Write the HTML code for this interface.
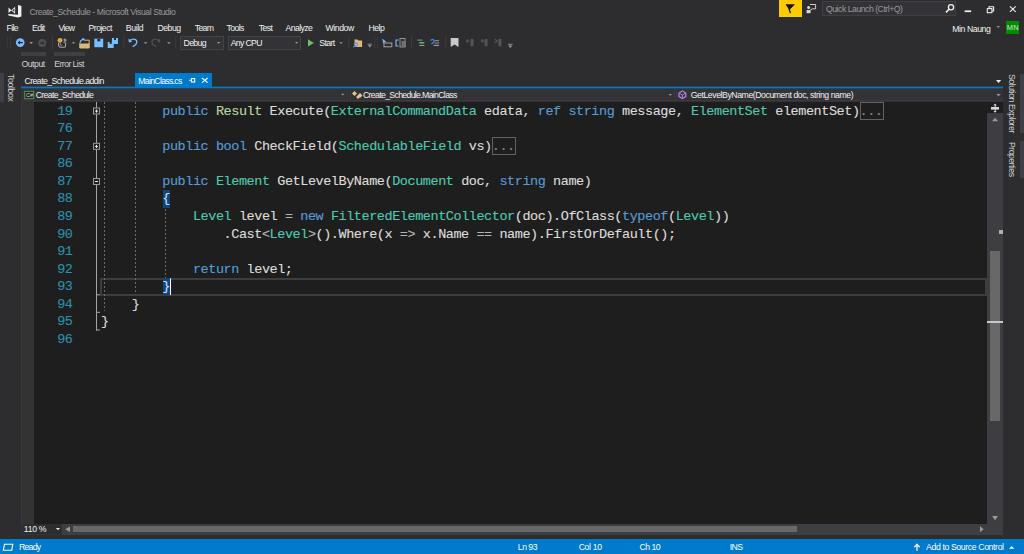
<!DOCTYPE html>
<html><head><meta charset="utf-8">
<style>
*{margin:0;padding:0;box-sizing:border-box}
html,body{width:1024px;height:554px;overflow:hidden;background:#2d2d30;position:relative;font-family:"Liberation Sans",sans-serif;}
.a{position:absolute}
.t{position:absolute;font-size:8.7px;letter-spacing:-0.4px;line-height:10px;white-space:nowrap;color:#f1f1f1}
.g{color:#999999}
.w{color:#ffffff}.d{color:#d0d0d0}
.code{position:absolute;left:101px;top:102.7px;-webkit-text-stroke:0.12px currentColor;font-family:"Liberation Mono",monospace;font-size:13.5px;letter-spacing:-0.44px;line-height:17.55px;white-space:pre;color:#dcdcdc}
.k{color:#569cd6}.col{color:#858585}.ty{color:#4ec9b0}.en{color:#b8d7a3}.op{color:#b4b4b4}
.ln{position:absolute;left:39px;width:33.5px;top:102.7px;-webkit-text-stroke:0.12px currentColor;font-family:"Liberation Mono",monospace;font-size:13.5px;letter-spacing:-0.44px;line-height:17.55px;white-space:pre;color:#2b91af;text-align:right}
.rot{transform-origin:0 0;transform:rotate(90deg)}
svg{position:absolute;left:0;top:0}
</style></head><body>

<!-- ===== backgrounds ===== -->
<!-- quick launch box -->
<div class="a" style="left:822px;top:1px;width:134px;height:15px;background:#333337;border:1px solid #3f3f46"></div>
<!-- yellow feedback -->
<div class="a" style="left:779px;top:0;width:23px;height:17px;background:#ffcc00"></div>
<!-- MN badge -->
<div class="a" style="left:1006px;top:21px;width:13px;height:13px;background:#028c02"></div>

<!-- combos -->
<div class="a" style="left:180px;top:36px;width:44px;height:14px;background:#333337;border:1px solid #434346"></div>
<div class="a" style="left:228px;top:36px;width:73px;height:14px;background:#333337;border:1px solid #434346"></div>

<!-- output / error list bars -->
<div class="a" style="left:21px;top:52px;width:25px;height:4px;background:#3f3f46"></div>
<div class="a" style="left:54px;top:52px;width:31px;height:4px;background:#3f3f46"></div>

<!-- toolbox strip -->
<div class="a" style="left:0;top:73px;width:4px;height:29px;background:#3f3f46"></div>
<!-- right strips -->
<div class="a" style="left:1020px;top:74px;width:4px;height:59px;background:#3f3f46"></div>
<div class="a" style="left:1020px;top:141px;width:4px;height:37px;background:#3f3f46"></div>

<!-- tab -->
<div class="a" style="left:21px;top:86px;width:982px;height:1px;background:#1d4867"></div>
<div class="a" style="left:21px;top:87px;width:982px;height:1px;background:#007acc"></div>
<div class="a" style="left:21px;top:88px;width:982px;height:1px;background:#244864"></div>
<div class="a" style="left:135px;top:73.3px;width:77px;height:14px;background:#007acc"></div>

<!-- nav bar -->
<div class="a" style="left:21px;top:89px;width:982px;height:13px;background:#333337"></div>
<div class="a" style="left:22px;top:89px;width:326px;height:12px;background:#333337;border-bottom:1px solid #3a3a3e;border-right:1px solid #3a3a3e"></div>
<div class="a" style="left:350px;top:89px;width:325px;height:12px;background:#333337;border-bottom:1px solid #3a3a3e;border-right:1px solid #3a3a3e;border-left:1px solid #3a3a3e"></div>
<div class="a" style="left:676px;top:89px;width:327px;height:12px;background:#333337;border-bottom:1px solid #3a3a3e;border-left:1px solid #3a3a3e"></div>

<!-- editor -->
<div class="a" style="left:21px;top:102px;width:13px;height:421.5px;background:#333333;border-left:1px solid #3b3a42"></div>
<div class="a" style="left:34px;top:102px;width:953px;height:421.5px;background:#1e1e1e"></div>

<!-- current line box -->
<div class="a" style="left:100px;top:278px;width:887px;height:18px;border:2px solid #3d3d3d"></div>
<!-- brace highlights -->
<div class="a" style="left:162.6px;top:190px;width:7.7px;height:17.7px;background:#0e4583"></div>
<div class="a" style="left:162.6px;top:278.3px;width:7.7px;height:16.8px;background:#0e4583"></div>
<!-- collapsed boxes -->
<div class="a" style="left:860px;top:102.3px;width:24px;height:17.3px;border:1px solid #626262"></div>
<div class="a" style="left:491.8px;top:137.2px;width:24.2px;height:17.9px;border:1px solid #626262"></div>

<!-- vertical scrollbar -->
<div class="a" style="left:987px;top:102px;width:16px;height:433px;background:#3e3e42"></div>
<div class="a" style="left:987px;top:102px;width:16px;height:11px;background:#1e1e1e"></div>
<div class="a" style="left:990px;top:251px;width:10px;height:170px;background:#686868"></div>
<div class="a" style="left:987px;top:321px;width:16px;height:2px;background:#c8c8c8"></div>
<div class="a" style="left:999px;top:230px;width:4px;height:4px;background:#b0b0b0"></div>

<!-- horizontal scrollbar -->
<div class="a" style="left:21px;top:523.5px;width:966px;height:11.5px;background:#3e3e42"></div>
<div class="a" style="left:21px;top:523.5px;width:41px;height:11.5px;background:#333337"></div>
<div class="a" style="left:22px;top:524.3px;width:39px;height:9.5px;background:#2d2d30"></div>
<div class="a" style="left:73px;top:526px;width:724px;height:6px;background:#686868"></div>

<!-- status bar -->
<div class="a" style="left:0;top:538.6px;width:1024px;height:15.4px;background:#007acc"></div>

<!-- ===== text ===== -->
<div class="t g" style="left:29.50px;top:6.80px;letter-spacing:-0.418px">Create_Schedule - Microsoft Visual Studio</div>
<div class="t g" style="left:826.00px;top:4.00px;letter-spacing:-0.488px">Quick Launch (Ctrl+Q)</div>
<div class="t " style="left:952.30px;top:23.60px;letter-spacing:-0.448px">Min Naung</div>
<div class="t " style="left:6.50px;top:22.50px;letter-spacing:-0.639px">File</div>
<div class="t " style="left:32.00px;top:22.50px;letter-spacing:-0.602px">Edit</div>
<div class="t " style="left:58.50px;top:22.50px;letter-spacing:-0.716px">View</div>
<div class="t " style="left:88.50px;top:22.50px;letter-spacing:-0.521px">Project</div>
<div class="t " style="left:125.75px;top:22.50px;letter-spacing:-0.372px">Build</div>
<div class="t " style="left:157.50px;top:22.50px;letter-spacing:-0.505px">Debug</div>
<div class="t " style="left:194.75px;top:22.50px;letter-spacing:-0.669px">Team</div>
<div class="t " style="left:226.50px;top:22.50px;letter-spacing:-0.609px">Tools</div>
<div class="t " style="left:258.75px;top:22.50px;letter-spacing:-0.6px">Test</div>
<div class="t " style="left:285.50px;top:22.50px;letter-spacing:-0.596px">Analyze</div>
<div class="t " style="left:325.50px;top:22.50px;letter-spacing:-0.425px">Window</div>
<div class="t " style="left:368.50px;top:22.50px;letter-spacing:-0.512px">Help</div>
<div class="t " style="left:183.50px;top:37.80px;letter-spacing:-0.617px">Debug</div>
<div class="t " style="left:230.70px;top:37.80px;letter-spacing:-0.65px">Any CPU</div>
<div class="t " style="left:319.30px;top:37.80px;letter-spacing:-0.633px">Start</div>
<div class="t d" style="left:21.50px;top:59.00px;letter-spacing:-0.483px">Output</div>
<div class="t d" style="left:54.25px;top:59.00px;letter-spacing:-0.564px">Error List</div>
<div class="t " style="left:24.50px;top:75.80px;letter-spacing:-0.549px">Create_Schedule.addin</div>
<div class="t w" style="left:138.30px;top:75.80px;letter-spacing:-0.7px">MainClass.cs</div>
<div class="t " style="left:35.70px;top:89.80px;letter-spacing:-0.643px">Create_Schedule</div>
<div class="t " style="left:363.00px;top:89.80px;letter-spacing:-0.656px">Create_Schedule.MainClass</div>
<div class="t " style="left:690.75px;top:89.80px;letter-spacing:-0.431px">GetLevelByName(Document doc, string name)</div>
<div class="t " style="left:23.80px;top:524.00px;letter-spacing:-0.3px">110 %</div>
<div class="t w" style="left:19.00px;top:542.10px;letter-spacing:-0.75px">Ready</div>
<div class="t w" style="left:517.80px;top:542.10px;letter-spacing:-0.5px">Ln 93</div>
<div class="t w" style="left:578.70px;top:542.10px;letter-spacing:-0.35px">Col 10</div>
<div class="t w" style="left:639.60px;top:542.10px;letter-spacing:-0.55px">Ch 10</div>
<div class="t w" style="left:729.70px;top:542.10px;letter-spacing:-0.6px">INS</div>
<div class="t w" style="left:926.00px;top:542.10px;letter-spacing:-0.372px">Add to Source Control</div>
<div class="t d rot" style="left:16.30px;top:73.70px;letter-spacing:-0.366px">Toolbox</div>
<div class="t d rot" style="left:1016.60px;top:73.60px;letter-spacing:-0.429px">Solution Explorer</div>
<div class="t d rot" style="left:1016.60px;top:141.70px;letter-spacing:-0.506px">Properties</div>
<div class="t" style="left:1006.8px;top:22.7px;font-size:7.4px;letter-spacing:0.3px;color:#cfe8cf">MN</div>

<!-- ===== code ===== -->
<div class="ln">19
76
77
86
87
88
89
90
91
92
93
94
95
96</div>
<div class="code">        <span class="k">public</span> <span class="en">Result</span> Execute(<span class="ty">ExternalCommandData</span> edata, <span class="k">ref</span> <span class="k">string</span> message, <span class="ty">ElementSet</span> elementSet)<span class="col">...</span>

        <span class="k">public</span> <span class="k">bool</span> CheckField(<span class="ty">SchedulableField</span> vs)<span class="col">...</span>

        <span class="k">public</span> <span class="ty">Element</span> GetLevelByName(<span class="ty">Document</span> doc, <span class="k">string</span> name)
        {
            <span class="ty">Level</span> level <span class="op">=</span> <span class="k">new</span> <span class="ty">FilteredElementCollector</span>(doc).OfClass(<span class="k">typeof</span>(<span class="ty">Level</span>))
                .Cast<span class="op">&lt;</span><span class="ty">Level</span><span class="op">&gt;</span>().Where(x <span class="op">=&gt;</span> x.Name <span class="op">==</span> name).FirstOrDefault();

            <span class="k">return</span> level;
        }
    }
}
</div>

<!-- ===== icons / lines (svg overlay) ===== -->
<svg width="1024" height="554" viewBox="0 0 1024 554">
<!-- VS logo -->
<g fill="#f0f0f0">
<polygon points="18,5 21.4,6.1 21.4,16.6 18,17.5"/>
<polygon points="8.2,14.1 18,14.7 18,17.5 8.4,15.6"/>
<polygon points="8.5,7.6 11.3,10.2 15.1,6.8 15.1,13.8 11.3,10.4 8.5,13.1"/>
</g>
<polygon points="12.4,10.35 14.3,8.6 14.3,12.1" fill="#2d2d30"/>
<!-- feedback funnel -->
<polygon points="785.5,4.2 795,4.2 790,9.2 791,13.3 789.9,13.2 788,8" fill="#111"/>
<!-- feedback person -->
<g fill="none" stroke="#d0d0d0" stroke-width="1">
<path d="M810,4.5 h5.6 v4.3 h-3.2 l-1.3,1.2 v-1.2"/>
</g>
<circle cx="808.6" cy="7.6" r="1.5" fill="#d8d8d8"/>
<rect x="806.6" y="10" width="4" height="3.2" fill="#d8d8d8"/>
<!-- magnifier -->
<circle cx="951" cy="7.3" r="2.6" fill="none" stroke="#f0f0f0" stroke-width="1.3"/>
<line x1="949.1" y1="9.3" x2="946" y2="12.4" stroke="#f0f0f0" stroke-width="1.6"/>
<!-- window buttons -->
<rect x="964.6" y="10.4" width="6.6" height="1.7" fill="#f0f0f0"/>
<g fill="none" stroke="#f0f0f0" stroke-width="1.1">
<path d="M989,8 V6.7 H993.6 V11 H992"/>
<rect x="987.3" y="8.6" width="4.6" height="4.1"/>
<path d="M1009.9,6.3 L1015.7,11.9 M1015.7,6.3 L1009.9,11.9"/>
</g>
<polygon points="996.6,26 999.9,26 998.25,27.9" fill="#999"/>
<!-- toolbar grips -->
<g fill="#404045" shape-rendering="crispEdges">
<rect x="7" y="37" width="1" height="1"/>
<rect x="10" y="37" width="1" height="1"/>
<rect x="7" y="39" width="1" height="1"/>
<rect x="10" y="39" width="1" height="1"/>
<rect x="7" y="41" width="1" height="1"/>
<rect x="10" y="41" width="1" height="1"/>
<rect x="7" y="43" width="1" height="1"/>
<rect x="10" y="43" width="1" height="1"/>
<rect x="7" y="45" width="1" height="1"/>
<rect x="10" y="45" width="1" height="1"/>
<rect x="7" y="47" width="1" height="1"/>
<rect x="10" y="47" width="1" height="1"/>
<rect x="374" y="37" width="1" height="1"/>
<rect x="377" y="37" width="1" height="1"/>
<rect x="374" y="39" width="1" height="1"/>
<rect x="377" y="39" width="1" height="1"/>
<rect x="374" y="41" width="1" height="1"/>
<rect x="377" y="41" width="1" height="1"/>
<rect x="374" y="43" width="1" height="1"/>
<rect x="377" y="43" width="1" height="1"/>
<rect x="374" y="45" width="1" height="1"/>
<rect x="377" y="45" width="1" height="1"/>
<rect x="374" y="47" width="1" height="1"/>
<rect x="377" y="47" width="1" height="1"/>
</g>
<!-- separators -->
<g fill="#3c3c40">
<rect x="52" y="36.5" width="1" height="12.5"/>
<rect x="123.2" y="36.5" width="1" height="12.5"/>
<rect x="175.2" y="36.5" width="1" height="12.5"/>
<rect x="348.2" y="36.5" width="1" height="12.5"/>
<rect x="411" y="36.5" width="1" height="12.5"/>
<rect x="445.3" y="36.5" width="1" height="12.5"/>
</g>
<!-- back / forward -->
<circle cx="20.2" cy="42.6" r="4.3" fill="#75beff"/>
<path d="M18.3,42.6 H22.7" stroke="#1e1e22" stroke-width="1.3"/>
<polygon points="17.6,42.6 19.9,40.6 19.9,44.6" fill="#1e1e22"/>
<circle cx="42.2" cy="43" r="4" fill="#4f4f52"/>
<path d="M39.8,43 H44" stroke="#2d2d30" stroke-width="1.2"/>
<polygon points="44.7,43 42.4,41.1 42.4,44.9" fill="#2d2d30"/>
<!-- dropdown arrows -->
<g fill="#999">
<polygon points="29.4,42 33.1,42 31.25,43.9"/>
<polygon points="71.7,42.3 75.4,42.3 73.55,44"/>
<polygon points="143.7,42.3 147.4,42.3 145.55,44"/>
<polygon points="167,42.3 170.8,42.3 168.9,44"/>
<polygon points="217,42 220.4,42 218.7,43.8"/>
<polygon points="295,42 298.2,42 296.6,43.8"/>
<polygon points="339.3,42.3 342.8,42.3 341.05,44"/>
<polygon points="367.8,45.3 371.8,45.3 369.8,47.6"/><rect x="367.6" y="43.7" width="4.3" height="0.9"/>
<polygon points="508.2,45.5 512.4,45.5 510.3,47.9"/><rect x="508" y="43.8" width="4.6" height="0.9"/>
<polygon points="341,93.8 344.6,93.8 342.8,95.6"/>
<polygon points="668.5,94.1 672,94.1 670.25,95.8"/>
<polygon points="996.2,93.9 1000.8,93.9 998.5,96.2"/>
<polygon points="992,121.2 998.1,121.2 995.05,117.8"/>
<polygon points="992.1,515.9 998,515.9 995.05,520.2"/>
<polygon points="65.2,529.2 70,526.4 70,532"/>
<polygon points="980,526 983.6,529.2 980,532.3"/>
</g>
<polygon points="996,80 1001.2,80 998.6,83" fill="#f0f0f0"/>
<polygon points="55.8,528 60.1,528 57.95,530.2" fill="#e0e0e0"/>
<!-- new project -->
<path d="M58.6,42.6 V45.8 Q58.8,47.3 61,47.3 H64.2 Q65.6,47.2 65.6,45.8 V42.4" fill="none" stroke="#a8a8a8" stroke-width="1.1"/>
<path d="M60.4,43 V45.3 H62.3" fill="none" stroke="#8a8a8a" stroke-width="0.9"/>
<ellipse cx="65" cy="40" rx="1.8" ry="1.2" transform="rotate(40 65 40)" fill="#9a9a9a"/>
<circle cx="64.2" cy="42.3" r="0.7" fill="#c8c8c8"/>
<circle cx="60" cy="40.3" r="2.4" fill="#e0a95a"/>
<circle cx="60" cy="40.3" r="0.8" fill="#c78a3a"/>
<!-- open folder -->
<path d="M84.2,40.2 H89.2 V48 H79.8 V43.2" fill="none" stroke="#dcb67a" stroke-width="1"/>
<path d="M79.6,43.6 H87.5 L89.2,43.3 V48 H79.8 Z" fill="#dcb67a"/>
<path d="M80,42.6 Q80.8,39.5 84,39.2" fill="none" stroke="#75beff" stroke-width="1.2"/>
<polygon points="82.6,37.8 85.2,39.2 82.8,40.8" fill="#75beff"/>
<!-- save -->
<rect x="94.3" y="38.7" width="8.9" height="8.5" fill="#75beff"/>
<rect x="97.3" y="38.7" width="3" height="2.6" fill="#2d2d30"/>
<!-- save all -->
<rect x="112" y="38" width="6" height="6" fill="#75beff"/>
<rect x="114" y="38" width="2" height="2" fill="#2d2d30"/>
<rect x="107.7" y="42" width="6" height="6" fill="#75beff"/>
<rect x="109.7" y="42" width="2" height="2" fill="#2d2d30"/>
<!-- undo / redo -->
<path d="M129.8,40.6 C133,38.2 137.4,39 136.8,42.6 C136.4,44.4 134.6,45.8 132.6,46.6" fill="none" stroke="#75beff" stroke-width="1.3"/>
<polygon points="128.5,38.5 128.8,42.6 132.3,41.6" fill="#75beff"/>
<path d="M159,40.6 C155.8,38.2 151.4,39 152,42.6 C152.4,44.4 154.2,45.8 156.2,46.6" fill="none" stroke="#505050" stroke-width="1.3"/>
<polygon points="160.3,38.5 160,42.6 156.5,41.6" fill="#505050"/>
<!-- play -->
<polygon points="308,39.3 313.8,43 308,46.6" fill="#6cbf6c"/>
<!-- folder w/ magnifier -->
<path d="M354.5,39.5 h3 l1,1 h3.6 v6.5 h-7.6 z" fill="#dcb67a"/>
<circle cx="356" cy="44.6" r="1.6" fill="none" stroke="#3794ff" stroke-width="1"/>
<line x1="354.8" y1="45.8" x2="353.3" y2="47.3" stroke="#3794ff" stroke-width="1.1"/>
<!-- cursor + box -->
<polygon points="382.3,38.4 386.4,42 384.2,42.2 383.4,44" fill="#75beff"/>
<rect x="384" y="43" width="7.8" height="3.8" fill="none" stroke="#a0a0a0" stroke-width="1"/>
<!-- docs icon -->
<path d="M398.5,40 h-2.5 v6 h2.5" fill="none" stroke="#75beff" stroke-width="1.1"/>
<rect x="400" y="38.5" width="5" height="8.5" fill="none" stroke="#909090" stroke-width="1"/>
<rect x="401.5" y="41" width="4.5" height="6" fill="#707070"/>
<!-- comment -->
<rect x="417.3" y="39.6" width="5" height="1" fill="#9a9a9a"/>
<rect x="419.3" y="42" width="5" height="1.6" fill="#5cb85c"/>
<rect x="419.3" y="45" width="5" height="1" fill="#9a9a9a"/>
<!-- uncomment -->
<path d="M430.5,40.5 c1.5,-1.5 3.5,-1.5 3.5,0.5 c0,1.5 -1.5,2 -2.5,3" fill="none" stroke="#3794ff" stroke-width="1.1"/>
<rect x="434.5" y="40.2" width="4.6" height="1" fill="#9a9a9a"/>
<rect x="434.5" y="42.5" width="4.6" height="1" fill="#9a9a9a"/>
<rect x="433.5" y="44.8" width="5.6" height="1.2" fill="#9a9a9a"/>
<!-- bookmark -->
<polygon points="450.7,37.9 458.5,37.9 458.5,47 454.6,44.4 450.7,47" fill="#c8c8c8"/>
<!-- gray bookmark nav icons -->
<g fill="none" stroke="#555" stroke-width="1.1">
<path d="M466.5,41 h3 M468,39.5 l-1.5,1.5 l1.5,1.5"/>
<path d="M480.5,41 h3 M482,39.5 l1.5,1.5 l-1.5,1.5"/>
<path d="M494.5,39 l3,2 l-3,2"/>
</g>
<g fill="#555">
<polygon points="470.5,39 473.5,39 473.5,47 472,45.5 470.5,47"/>
<polygon points="484.5,39 487.5,39 487.5,47 486,45.5 484.5,47"/>
<polygon points="498.5,39 501.5,39 501.5,47 500,45.5 498.5,47"/>
</g>
<!-- tab pin + close -->
<g fill="none" stroke="#ffffff" stroke-width="1.1">
<path d="M189.3,80.3 h2"/>
<rect x="191.5" y="78.6" width="3.2" height="3.4"/>
<path d="M202,78 L207.6,82.6 M207.6,78 L202,82.6"/>
</g>
<!-- C# icon -->
<rect x="24.7" y="91.3" width="9" height="7.4" fill="#252526" stroke="#4e9a4e" stroke-width="1"/>
<text x="26" y="97.3" font-family="Liberation Sans" font-size="5.5" fill="#d0d0d0">C#</text>
<!-- class icon -->
<g fill="#e8c28a">
<polygon points="352,93.5 354.5,91 357,93.5 354.5,96"/>
<polygon points="357.5,95.5 360,93 362.5,95.5 360,98"/>
<polygon points="356,97 358,95.2 360,97 358,99"/>
</g>
<!-- method icon -->
<polygon points="682.4,91 685.8,93 685.8,96.6 682.4,98.5 679,96.6 679,93" fill="none" stroke="#b180d7" stroke-width="1.3"/>
<path d="M679.3,93.2 L682.4,95 L685.5,93.2 M682.4,95 V98" fill="none" stroke="#b180d7" stroke-width="1"/>
<!-- splitter -->
<g fill="#d8d8d8">
<rect x="991" y="107" width="8" height="2.6"/>
<rect x="994.7" y="104.5" width="1" height="7.5"/>
<polygon points="993.3,105.5 996.7,105.5 995.2,103.6"/>
<polygon points="993.3,111 996.7,111 995.2,112.8"/>
</g>
<!-- outlining -->
<g fill="#a5a5a5">
<rect x="96" y="102" width="1" height="228.5"/>
<rect x="96" y="294.3" width="4" height="1"/>
<rect x="96" y="311.8" width="4" height="1"/>
<rect x="96" y="329.5" width="4" height="1"/>
</g>
<g fill="#1e1e1e" stroke="#9a9a9a" stroke-width="1">
<rect x="93.5" y="108" width="6" height="6"/>
<rect x="93.5" y="143.3" width="6" height="6"/>
<rect x="93.5" y="178.5" width="6" height="6"/>
</g>
<g fill="#e8e8e8">
<rect x="95" y="110.6" width="3" height="1"/><rect x="96" y="109.5" width="1" height="3.2"/>
<rect x="95" y="145.9" width="3" height="1"/><rect x="96" y="144.8" width="1" height="3.2"/>
<rect x="95" y="181" width="3" height="1"/>
</g>
<!-- indent guides -->
<g stroke="#6a6a6a" stroke-width="1" stroke-dasharray="2,2">
<line x1="104.5" y1="102" x2="104.5" y2="311"/>
<line x1="135.5" y1="102" x2="135.5" y2="294"/>
<line x1="165.5" y1="209" x2="165.5" y2="278"/>
</g>
<!-- cursor -->
<rect x="170" y="278.3" width="1" height="16.8" fill="#ffffff"/>
<!-- status icons -->
<polygon points="4.5,544.2 12.8,544.2 11.8,550.3 3.3,550.3" fill="none" stroke="#ffffff" stroke-width="1.1"/>
<path d="M917,550.7 V545 M914.3,547.3 L917,544.4 L919.7,547.3" fill="none" stroke="#f3e6cc" stroke-width="1.4"/>
<polygon points="1009,548.7 1014.4,548.7 1011.7,546" fill="#ffffff"/>
</svg>
</body></html>
